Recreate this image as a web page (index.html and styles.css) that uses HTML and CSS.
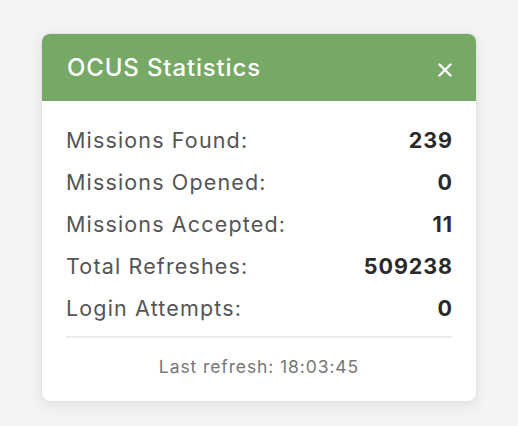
FILE: index.html
```html
<!DOCTYPE html>
<html>
<head>
<meta charset="utf-8">
<link rel="stylesheet" href="styles.css">
</head>
<body>
<div class="card">
  <div class="header">
    <span class="title">OCUS Statistics</span>
    <svg class="close" width="14" height="14" viewBox="0 0 14 14"><path d="M1.5 1.5L12.5 12.5M12.5 1.5L1.5 12.5" stroke="#fff" stroke-width="2.4" stroke-linecap="round"/></svg>
  </div>
  <div class="body">
    <div class="row"><span class="label">Missions Found:</span><span class="value">239</span></div>
    <div class="row"><span class="label">Missions Opened:</span><span class="value">0</span></div>
    <div class="row"><span class="label">Missions Accepted:</span><span class="value">11</span></div>
    <div class="row"><span class="label">Total Refreshes:</span><span class="value">509238</span></div>
    <div class="row"><span class="label">Login Attempts:</span><span class="value">0</span></div>
    <div class="footer">Last refresh: 18:03:45</div>
  </div>
</div>
</body>
</html>
```
FILE: styles.css
```css
html, body { margin: 0; padding: 0; }
body {
  background: #f3f4f3;
  font-family: Inter, "Noto Sans", sans-serif;
  width: 518px;
  height: 426px;
  padding: 33px 0 0 41px;
  box-sizing: border-box;
}
.card {
  width: 436px;
  background: #fff;
  border: 1px solid #e2e3e2;
  border-radius: 9px;
  overflow: hidden;
  box-shadow: 0 4px 14px rgba(0,0,0,0.08);
  box-sizing: border-box;
}
.header {
  background: #76a965;
  height: 67px;
  display: flex;
  align-items: center;
  justify-content: space-between;
  padding: 0 24px 0 25px;
}
.title {
  color: #fff;
  font-size: 24px;
  font-weight: 500;
  letter-spacing: 0.85px;
}
.close { display: block; margin-top: 4px; }
.body {
  padding: 18px 24px 0 24px;
}
.row {
  display: flex;
  justify-content: space-between;
  align-items: center;
  height: 42px;
  font-size: 21.5px;
  letter-spacing: 1.15px;
}
.label { color: #555; }
.value { color: #2a2a2a; font-weight: 700; letter-spacing: 0.9px; margin-right: -0.9px; }
.footer {
  margin-top: 7px;
  border-top: 2px solid #ececec;
  text-align: center;
  color: #777;
  font-size: 17.5px;
  letter-spacing: 0.9px;
  padding: 19px 0 24px;
  line-height: 20px;
}
```
